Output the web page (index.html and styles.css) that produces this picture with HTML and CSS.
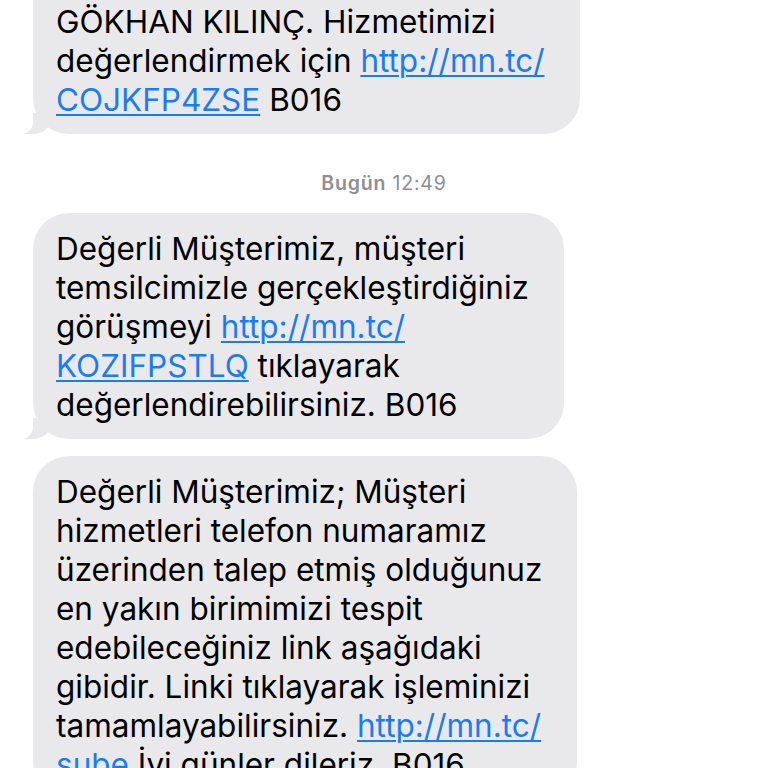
FILE: index.html
```html
<!DOCTYPE html>
<html lang="tr">
<head>
<meta charset="utf-8">
<link rel="stylesheet" href="styles.css">
</head>
<body>
<div class="thread">
  <div class="bubble first">
    <p>GÖKHAN KILINÇ. Hizmetimizi<br>değerlendirmek için <a href="#">http://mn.tc/<br>COJKFP4ZSE</a> B016</p>
  </div>
  <div class="stamp"><b>Bugün</b> 12:49</div>
  <div class="bubble">
    <p>Değerli Müşterimiz, müşteri<br>temsilcimizle gerçekleştirdiğiniz<br>görüşmeyi <a href="#">http://mn.tc/<br>KOZIFPSTLQ</a> tıklayarak<br>değerlendirebilirsiniz. B016</p>
  </div>
  <div class="bubble">
    <p>Değerli Müşterimiz; Müşteri<br>hizmetleri telefon numaramız<br>üzerinden talep etmiş olduğunuz<br>en yakın birimimizi tespit<br>edebileceğiniz link aşağıdaki<br>gibidir. Linki tıklayarak işleminizi<br>tamamlayabilirsiniz. <a href="#">http://mn.tc/<br>sube</a> İyi günler dileriz. B016</p>
  </div>
</div>
</body>
</html>
```

FILE: styles.css
```css
html, body {
  margin: 0;
  padding: 0;
  background: #ffffff;
  overflow: hidden;
}
.thread {
  display: flex;
  flex-direction: column;
  align-items: flex-start;
  padding-left: 33px;
  font-family: "Inter", "Liberation Sans", sans-serif;
}
.bubble {
  position: relative;
  background: #e9e9eb;
  border-radius: 36px;
  padding: 16px 35px 15px 23px;
  margin-bottom: 17px;
}
.bubble.first {
  margin-top: -53px;
  padding-top: 55px;
  margin-bottom: 0;
}
.bubble p {
  margin: 0;
  font-size: 31.5px;
  line-height: 39px;
  color: #000;
  white-space: nowrap;
}
.bubble a {
  color: #1a7cf5;
  text-decoration: underline;
  text-underline-offset: 3px;
  text-decoration-thickness: 2px;
}
.bubble::before {
  content: "";
  position: absolute;
  bottom: 0;
  left: -10px;
  width: 30px;
  height: 21px;
  background: #e9e9eb;
  border-bottom-right-radius: 20px 20px;
}
.bubble::after {
  content: "";
  position: absolute;
  bottom: 0;
  left: -20px;
  width: 20px;
  height: 26px;
  background: #ffffff;
  border-bottom-right-radius: 12px 12px;
}
.stamp {
  align-self: stretch;
  margin-left: -33px;
  text-align: center;
  font-size: 19.5px;
  letter-spacing: 0.8px;
  color: #8e8e93;
  padding: 38px 0 19px;
  line-height: 22px;
}
.stamp b {
  font-weight: 600;
}
```
